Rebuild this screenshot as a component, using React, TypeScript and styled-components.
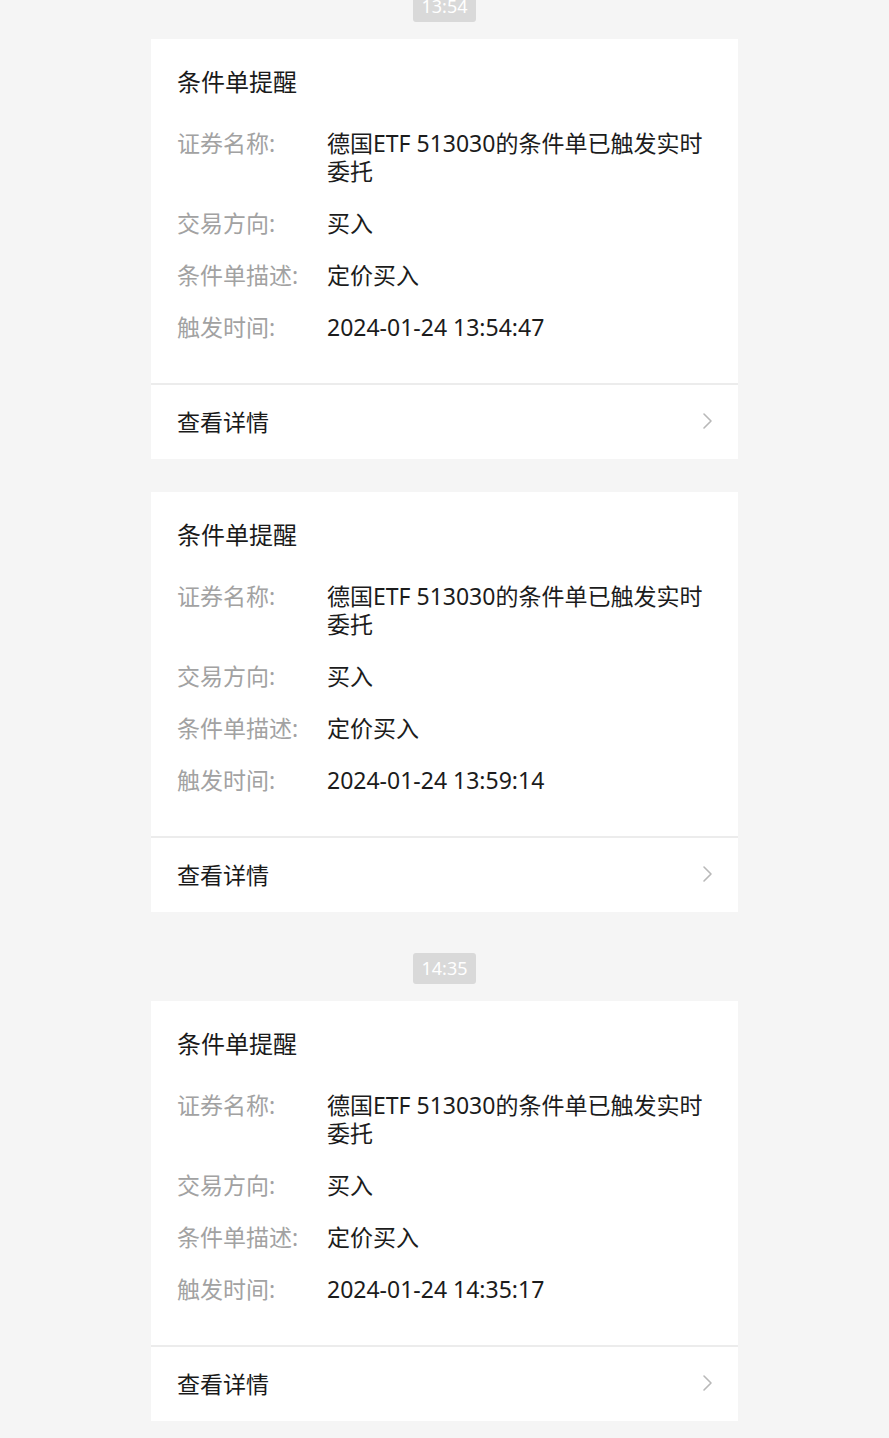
import styled, {createGlobalStyle} from "styled-components";
import * as React from "react";

const GlobalStyle = createGlobalStyle`
    * {
        box-sizing: border-box;
    }

    body {
        margin: 0;
        background: #f5f5f5;
        font-family: "Noto Sans", "Noto Sans CJK SC", sans-serif;
        color: #1c1c1c;
    }
`;

const Page = styled.div`
    display: flex;
    flex-direction: column;
    align-items: center;
    margin-top: -9px;
    padding-bottom: 18px;
`;

const TimeTag = styled.div<{ $first?: boolean }>`
    height: 31px;
    padding: 0 8px;
    min-width: 63px;
    margin-top: ${({$first}) => $first ? '0' : '41px'};
    margin-bottom: 17px;
    border-radius: 3px;
    background: #d9d9d9;
    color: #ffffff;
    font-size: 18px;
    line-height: 31px;
    text-align: center;
`;

const Card = styled.div`
    width: 587px;
    background: #ffffff;
    & + & {
        margin-top: 33px;
    }
`;

const Body = styled.div`
    padding: 26px 16px 42px 26px;
`;

const Title = styled.h3`
    margin: 0 0 30px;
    font-size: 24px;
    font-weight: 400;
    line-height: 34px;
    color: #1a1a1a;
`;

const Rows = styled.div`
    display: flex;
    flex-direction: column;
    gap: 24px;
`;

const Row = styled.div`
    display: grid;
    grid-template-columns: 150px 1fr;
    font-size: 23px;
    line-height: 28px;
`;

const Label = styled.span`
    color: #a2a2a2;
`;

const Value = styled.span`
    color: #1c1c1c;
`;

const Footer = styled.div`
    display: flex;
    align-items: center;
    justify-content: space-between;
    height: 76px;
    padding: 0 24px 3px 26px;
    border-top: 2px solid #ececec;
    font-size: 23px;
    color: #1a1a1a;
`;

const Chevron = () => (
    <svg width="14" height="20" viewBox="0 0 14 20" fill="none">
        <polyline points="4,3 11,10 4,17" stroke="#b8b8b8" strokeWidth="1.6" strokeLinecap="round" strokeLinejoin="round"/>
    </svg>
);

type Alert = {
    time?: string;
    triggered: string;
};

const alerts: Alert[] = [
    {time: '13:54', triggered: '2024-01-24 13:54:47'},
    {triggered: '2024-01-24 13:59:14'},
    {time: '14:35', triggered: '2024-01-24 14:35:17'},
];

const AlertCard: React.FC<{ triggered: string }> = ({triggered}) => (
    <Card>
        <Body>
            <Title>条件单提醒</Title>
            <Rows>
                <Row>
                    <Label>证券名称:</Label>
                    <Value>德国ETF 513030的条件单已触发实时委托</Value>
                </Row>
                <Row>
                    <Label>交易方向:</Label>
                    <Value>买入</Value>
                </Row>
                <Row>
                    <Label>条件单描述:</Label>
                    <Value>定价买入</Value>
                </Row>
                <Row>
                    <Label>触发时间:</Label>
                    <Value>{triggered}</Value>
                </Row>
            </Rows>
        </Body>
        <Footer>
            <span>查看详情</span>
            <Chevron/>
        </Footer>
    </Card>
);

export default function App() {
    return (
        <>
            <GlobalStyle/>
            <Page>
                {alerts.map((a, i) => (
                    <React.Fragment key={i}>
                        {a.time && <TimeTag $first={i === 0}>{a.time}</TimeTag>}
                        <AlertCard triggered={a.triggered}/>
                    </React.Fragment>
                ))}
            </Page>
        </>
    );
}
